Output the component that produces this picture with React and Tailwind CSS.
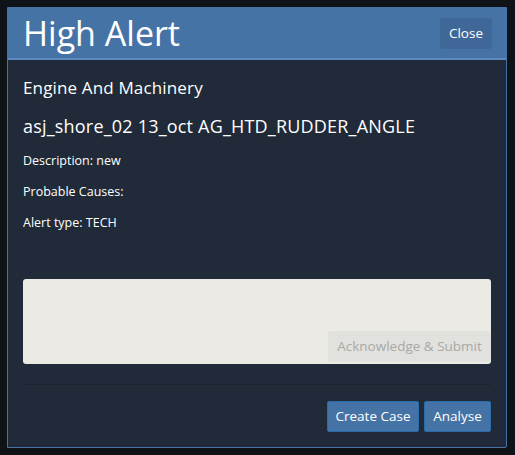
export default function App() {
  return (
    <div className="w-[515px] h-[455px] bg-[#0f1216] pt-[7px] pl-[7px]" style={{ fontFamily: '"Open Sans", sans-serif' }}>
      <div className="w-[500px] h-[441px] border border-[#4673a6] bg-[#212a38] flex flex-col rounded-br-[2px]">
        <div className="h-[52px] bg-[#4673a6] border-b-2 border-[#5b8ac0] flex items-center justify-between pl-[15px] pr-[14px]">
          <div className="text-white text-[34px] leading-none -mt-[1px]">High Alert</div>
          <button className="h-[31px] px-[9px] bg-[#3f6898] rounded-[3px] text-[13.5px] text-white">Close</button>
        </div>
        <div className="px-[15px] flex flex-col text-white">
          <div className="mt-[17px] text-[17px] leading-[22px] tracking-[0.15px]">Engine And Machinery</div>
          <div className="mt-[16px] text-[18px] leading-[22px] tracking-[0.2px]">asj_shore_02 13_oct AG_HTD_RUDDER_ANGLE</div>
          <div className="mt-[15px] text-[12.5px] leading-[18px]">Description: new</div>
          <div className="mt-[13px] text-[12.5px] leading-[18px]">Probable Causes:</div>
          <div className="mt-[13px] text-[12.5px] leading-[18px]">Alert type: TECH</div>
          <div className="mt-[47px] h-[85px] bg-[#ebeae4] rounded-[3px] flex items-end justify-end">
            <div className="h-[31px] w-[163px] bg-[#e1e1dd] rounded-[3px] flex items-center justify-center text-[13.5px] text-[#a9a9a7] mb-[2px]">Acknowledge &amp; Submit</div>
          </div>
          <div className="mt-[20px] h-px bg-[#1b2230]"></div>
          <div className="mt-[16px] flex justify-end gap-[5px]">
            <button className="h-[31px] w-[92px] bg-[#4673a6] border border-[#2a6bab] rounded-[2px] text-[13.5px] text-white">Create Case</button>
            <button className="h-[31px] w-[67px] bg-[#4673a6] border border-[#2a6bab] rounded-[2px] text-[13.5px] text-white">Analyse</button>
          </div>
        </div>
      </div>
    </div>
  );
}
